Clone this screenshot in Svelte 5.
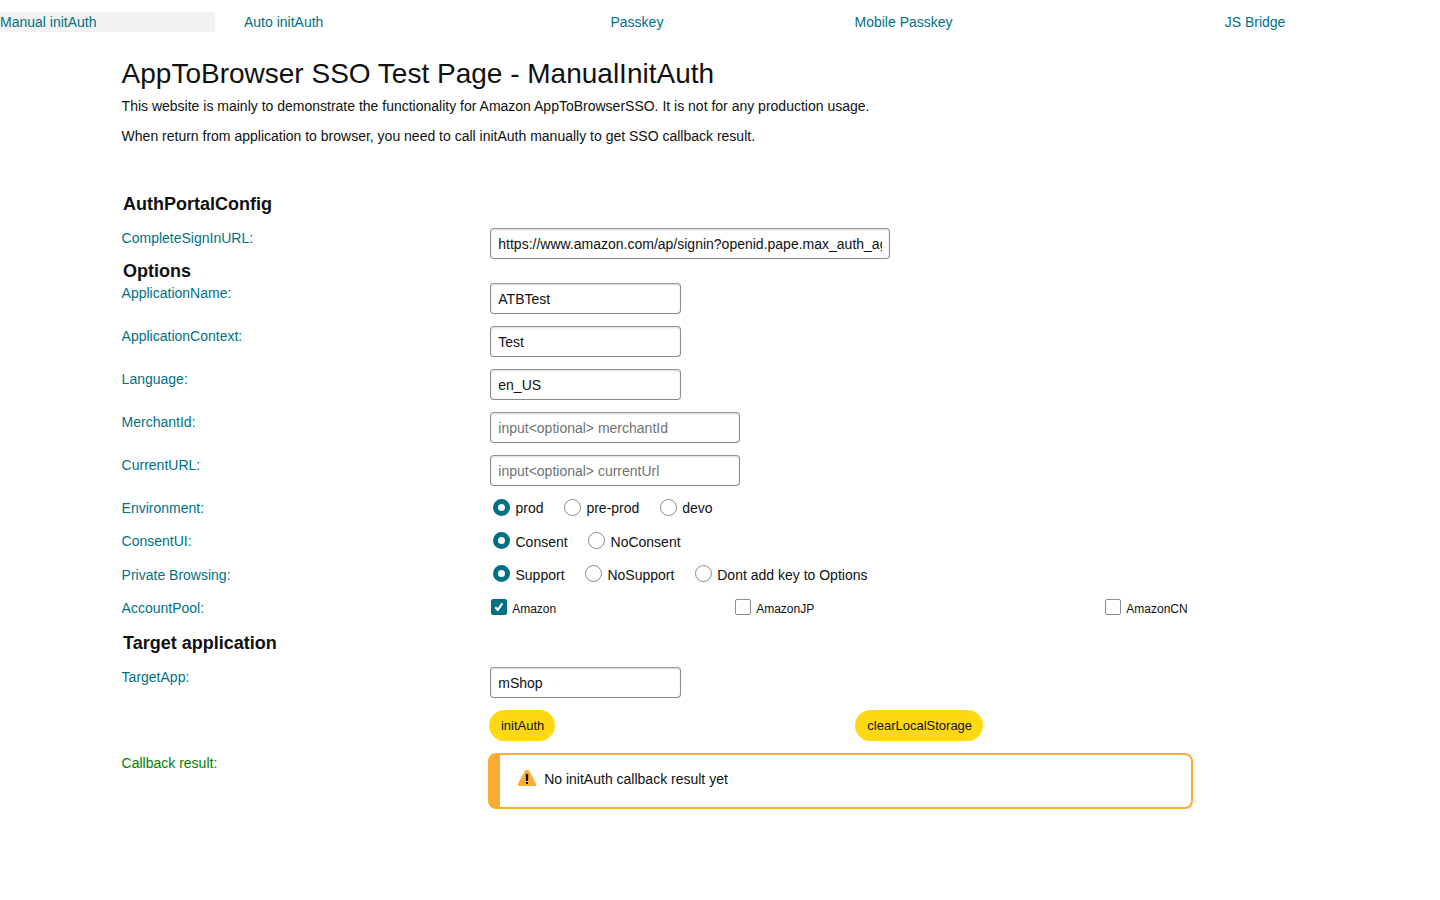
<script>
  const tabs = ['Manual initAuth', 'Auto initAuth', 'Passkey', 'Mobile Passkey', 'JS Bridge'];
  const fields = [
    { label: 'ApplicationName:', value: 'ATBTest', size: 'small' },
    { label: 'ApplicationContext:', value: 'Test', size: 'small' },
    { label: 'Language:', value: 'en_US', size: 'small' },
    { label: 'MerchantId:', value: '', hint: 'input<optional> merchantId', size: 'medium' },
    { label: 'CurrentURL:', value: '', hint: 'input<optional> currentUrl', size: 'medium' }
  ];
  const groups = [
    { label: 'Environment:', name: 'env', cls: 'env', options: ['prod', 'pre-prod', 'devo'] },
    { label: 'ConsentUI:', name: 'consent', cls: 'consent', options: ['Consent', 'NoConsent'] },
    { label: 'Private Browsing:', name: 'private', cls: 'private', options: ['Support', 'NoSupport', 'Dont add key to Options'] }
  ];
  const pools = ['Amazon', 'AmazonJP', 'AmazonCN'];
</script>

<nav>
  {#each tabs as tab, i}
    <a href="#top" class:active={i === 0}>{tab}</a>
  {/each}
</nav>

<main>
  <h1>AppToBrowser SSO Test Page - ManualInitAuth</h1>
  <p>This website is mainly to demonstrate the functionality for Amazon AppToBrowserSSO. It is not for any production usage.</p>
  <p>When return from application to browser, you need to call initAuth manually to get SSO callback result.</p>

  <h2 class="config">AuthPortalConfig</h2>
  <div class="row url">
    <span class="label">CompleteSignInURL:</span>
    <input class="text large" type="text" value="https://www.amazon.com/ap/signin?openid.pape.max_auth_age=0" />
  </div>

  <h2>Options</h2>
  {#each fields as f}
    <div class="row field">
      <span class="label">{f.label}</span>
      <input class="text {f.size}" type="text" value={f.value} placeholder={f.hint} />
    </div>
  {/each}

  {#each groups as g}
    <div class="row choice {g.cls}">
      <span class="label">{g.label}</span>
      <div class="radios">
        {#each g.options as o, i}
          <label><input type="radio" name={g.name} checked={i === 0} /><span>{o}</span></label>
        {/each}
      </div>
    </div>
  {/each}

  <div class="row choice">
    <span class="label">AccountPool:</span>
    <div class="pools">
      {#each pools as p, i}
        <label>
          <span class="box" class:on={i === 0}>
            {#if i === 0}
              <svg width="16" height="16" viewBox="0 0 16 16"><path d="M4.3 8.3 6.8 10.8 11.3 4.4" fill="none" stroke="#fff" stroke-width="2.3" /></svg>
            {/if}
          </span>
          <span class="name">{p}</span>
        </label>
      {/each}
    </div>
  </div>

  <h2 class="target">Target application</h2>
  <div class="row field">
    <span class="label">TargetApp:</span>
    <input class="text small" type="text" value="mShop" />
  </div>

  <div class="actions">
    <button>initAuth</button>
    <button>clearLocalStorage</button>
  </div>

  <div class="row">
    <span class="label result">Callback result:</span>
    <div class="alert">
      <svg width="18" height="16" viewBox="0 0 18 16">
        <path d="M7.4 0h3.2L18 13.6V16H0v-2.4z" fill="#ffac36" />
        <path d="M7.8 4h2.4v5L9.8 11H8.2L7.8 9zM8 12h2v2H8z" fill="#0f1111" />
      </svg>
      <span>No initAuth callback result yet</span>
    </div>
  </div>
</main>

<style>
  :global(body) {
    background: #fff;
    color: #0f1111;
    font: 14px/20px "Liberation Sans", Arial, sans-serif;
  }
  nav {
    display: grid;
    grid-template-columns: 244px 366.5px 244px 370.2px 1fr;
    padding-top: 12px;
  }
  a {
    color: #007185;
    text-decoration: none;
  }
  a.active {
    width: 215px;
    background: #f2f2f2;
  }
  main {
    padding: 24px 0 0 121.6px;
  }
  h1 {
    margin: 0 0 4px;
    font-size: 28px;
    line-height: 36px;
    font-weight: 400;
  }
  p {
    margin: 0 0 10px;
  }
  h2 {
    margin: 0;
    padding-left: 1.4px;
    font-size: 18px;
    line-height: 24px;
    font-weight: 700;
  }
  h2.config {
    margin: 46px 0 12px;
  }
  h2.target {
    margin-bottom: 12px;
  }
  .row {
    display: grid;
    grid-template-columns: 366.6px 1fr;
    align-items: start;
  }
  .url {
    height: 31px;
  }
  .field {
    height: 43px;
  }
  .choice {
    height: 33px;
  }
  .consent {
    height: 34px;
  }
  .label {
    color: #007185;
  }
  .result {
    color: #008000;
  }
  .text {
    box-sizing: border-box;
    height: 31px;
    margin: 0 0 0 2.1px;
    padding: 3px 7px;
    border: 1px solid #888c8c;
    border-top-color: #949494;
    border-radius: 4px;
    background: #fff;
    box-shadow: 0 1px 2px rgba(15, 17, 17, 0.15) inset;
    color: #0f1111;
    font: 14px/20px "Liberation Sans", Arial, sans-serif;
    outline: 0;
  }
  .text::placeholder {
    color: #6f7373;
  }
  .small {
    width: 191px;
  }
  .medium {
    width: 250px;
  }
  .large {
    width: 400px;
  }
  .radios {
    display: flex;
    gap: 20.6px;
    padding-left: 5px;
  }
  .radios label {
    display: flex;
    align-items: flex-start;
    gap: 5.3px;
  }
  .radios input {
    appearance: none;
    box-sizing: border-box;
    width: 17px;
    height: 17px;
    margin: 1px 0 0;
    border: 1px solid #888c8c;
    border-radius: 50%;
    background: #fff;
  }
  .radios input:checked {
    border: 5px solid #007185;
  }
  .private .radios input {
    margin-top: 0;
  }
  .consent .radios span {
    padding-top: 1px;
  }
  .pools {
    display: grid;
    grid-template-columns: 244px 370.1px 1fr;
    padding-left: 3px;
  }
  .pools label {
    display: flex;
    gap: 5px;
    font-size: 12px;
  }
  .box {
    box-sizing: border-box;
    width: 16px;
    height: 16px;
    margin-top: 1px;
    border: 1px solid #888c8c;
    border-radius: 2px;
  }
  .box.on {
    border: 0;
    background: #007185;
  }
  .box svg {
    display: block;
  }
  .name {
    padding-top: 1px;
  }
  .actions {
    display: grid;
    grid-template-columns: 366.3px 1fr;
    justify-items: start;
    padding: 0 0 12px 367.4px;
  }
  button {
    height: 31px;
    padding: 0 11.1px 0 12px;
    border: 0;
    border-radius: 16px;
    background: #ffd814;
    color: #0f1111;
    font: 13px/29px "Liberation Sans", Arial, sans-serif;
  }
  .alert {
    box-sizing: border-box;
    display: flex;
    gap: 8px;
    width: 705px;
    height: 56px;
    padding: 14px 18px;
    border: 2px solid #ffac36;
    border-left-width: 12px;
    border-radius: 8px;
  }
  .alert svg {
    margin-top: 1px;
  }
</style>
